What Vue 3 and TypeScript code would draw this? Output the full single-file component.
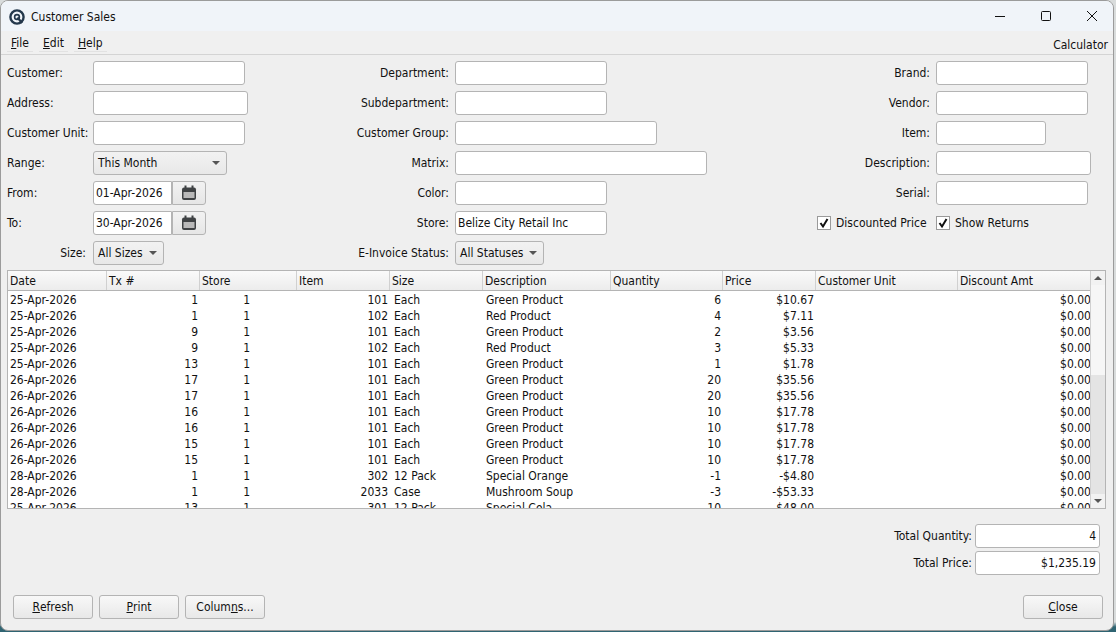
<script setup lang="ts">
type Row = [string, number, number, number, string, string, number, string, string]

const columns = [
  { name: 'Date', width: 99 },
  { name: 'Tx #', width: 93 },
  { name: 'Store', width: 97 },
  { name: 'Item', width: 93 },
  { name: 'Size', width: 93 },
  { name: 'Description', width: 128 },
  { name: 'Quantity', width: 112 },
  { name: 'Price', width: 93 },
  { name: 'Customer Unit', width: 142 },
  { name: 'Discount Amt', width: 136 },
]

const rows: Row[] = [
  ['25-Apr-2026', 1, 1, 101, 'Each', 'Green Product', 6, '$10.67', '$0.00'],
  ['25-Apr-2026', 1, 1, 102, 'Each', 'Red Product', 4, '$7.11', '$0.00'],
  ['25-Apr-2026', 9, 1, 101, 'Each', 'Green Product', 2, '$3.56', '$0.00'],
  ['25-Apr-2026', 9, 1, 102, 'Each', 'Red Product', 3, '$5.33', '$0.00'],
  ['25-Apr-2026', 13, 1, 101, 'Each', 'Green Product', 1, '$1.78', '$0.00'],
  ['26-Apr-2026', 17, 1, 101, 'Each', 'Green Product', 20, '$35.56', '$0.00'],
  ['26-Apr-2026', 17, 1, 101, 'Each', 'Green Product', 20, '$35.56', '$0.00'],
  ['26-Apr-2026', 16, 1, 101, 'Each', 'Green Product', 10, '$17.78', '$0.00'],
  ['26-Apr-2026', 16, 1, 101, 'Each', 'Green Product', 10, '$17.78', '$0.00'],
  ['26-Apr-2026', 15, 1, 101, 'Each', 'Green Product', 10, '$17.78', '$0.00'],
  ['26-Apr-2026', 15, 1, 101, 'Each', 'Green Product', 10, '$17.78', '$0.00'],
  ['28-Apr-2026', 1, 1, 302, '12 Pack', 'Special Orange', -1, '-$4.80', '$0.00'],
  ['28-Apr-2026', 1, 1, 2033, 'Case', 'Mushroom Soup', -3, '-$53.33', '$0.00'],
  ['25-Apr-2026', 13, 1, 301, '12 Pack', 'Special Cola', 10, '$48.00', '$0.00'],
]

const gridColumns = columns.map((c) => c.width + 'px').join(' ')
</script>

<template>
  <div class="window">
    <header class="titlebar">
      <svg class="logo" width="16" height="16" viewBox="0 0 16 16">
        <circle cx="8" cy="8" r="6.6" fill="none" stroke="#24384c" stroke-width="2.4" />
        <circle cx="8" cy="8" r="2.4" fill="none" stroke="#24384c" stroke-width="1.6" />
        <path d="M8.5 8.5 L13 14" stroke="#24384c" stroke-width="2.2" />
      </svg>
      <span class="title">Customer Sales</span>
      <div class="controls">
        <svg width="46" height="30" viewBox="0 0 46 30"><path d="M18 15.5h10" stroke="#111" /></svg>
        <svg width="46" height="30" viewBox="0 0 46 30"><rect x="18.5" y="10.5" width="9" height="9" rx="1" fill="none" stroke="#111" /></svg>
        <svg width="46" height="30" viewBox="0 0 46 30"><path d="M18 10l10 10M28 10L18 20" stroke="#111" /></svg>
      </div>
    </header>

    <nav class="menubar">
      <span class="menu"><u>F</u>ile</span>
      <span class="menu"><u>E</u>dit</span>
      <span class="menu"><u>H</u>elp</span>
      <span class="calculator">Calculator</span>
    </nav>

    <section class="form">
      <label class="lbl">Customer:</label>
      <div class="field"><div class="input" style="width: 152px"></div></div>
      <label class="lbl right">Department:</label>
      <div class="field"><div class="input" style="width: 152px"></div></div>
      <label class="lbl right">Brand:</label>
      <div class="field"><div class="input" style="width: 152px"></div></div>

      <label class="lbl">Address:</label>
      <div class="field"><div class="input" style="width: 155px"></div></div>
      <label class="lbl right">Subdepartment:</label>
      <div class="field"><div class="input" style="width: 152px"></div></div>
      <label class="lbl right">Vendor:</label>
      <div class="field"><div class="input" style="width: 152px"></div></div>

      <label class="lbl">Customer Unit:</label>
      <div class="field"><div class="input" style="width: 152px"></div></div>
      <label class="lbl right">Customer Group:</label>
      <div class="field"><div class="input" style="width: 202px"></div></div>
      <label class="lbl right">Item:</label>
      <div class="field"><div class="input" style="width: 110px"></div></div>

      <label class="lbl">Range:</label>
      <div class="field">
        <div class="combo" style="width: 134px">This Month<i class="caret"></i></div>
      </div>
      <label class="lbl right">Matrix:</label>
      <div class="field"><div class="input" style="width: 252px"></div></div>
      <label class="lbl right">Description:</label>
      <div class="field"><div class="input" style="width: 155px"></div></div>

      <label class="lbl">From:</label>
      <div class="field">
        <div class="input date">01-Apr-2026</div>
        <div class="calbtn">
          <svg width="16" height="16" viewBox="0 0 16 16">
            <rect x="1" y="2.5" width="14" height="12.5" rx="2" fill="#3f4244" />
            <rect x="2.5" y="7" width="11" height="6" fill="#b9b9b9" />
            <path d="M4.5 0.5v3.5M11.5 0.5v3.5" stroke="#3f4244" stroke-width="2" />
          </svg>
        </div>
      </div>
      <label class="lbl right">Color:</label>
      <div class="field"><div class="input" style="width: 152px"></div></div>
      <label class="lbl right">Serial:</label>
      <div class="field"><div class="input" style="width: 152px"></div></div>

      <label class="lbl">To:</label>
      <div class="field">
        <div class="input date">30-Apr-2026</div>
        <div class="calbtn">
          <svg width="16" height="16" viewBox="0 0 16 16">
            <rect x="1" y="2.5" width="14" height="12.5" rx="2" fill="#3f4244" />
            <rect x="2.5" y="7" width="11" height="6" fill="#b9b9b9" />
            <path d="M4.5 0.5v3.5M11.5 0.5v3.5" stroke="#3f4244" stroke-width="2" />
          </svg>
        </div>
      </div>
      <label class="lbl right">Store:</label>
      <div class="field"><div class="input text" style="width: 152px">Belize City Retail Inc</div></div>
      <div class="check first">
        <svg class="box" width="14" height="14" viewBox="0 0 14 14">
          <rect x="0.5" y="0.5" width="13" height="13" fill="#fff" stroke="#9a9a9a" />
          <path d="M3.5 7l2.5 3.5L10.5 3" fill="none" stroke="#111" stroke-width="2" />
        </svg>
        Discounted Price
      </div>
      <div class="check">
        <svg class="box" width="14" height="14" viewBox="0 0 14 14">
          <rect x="0.5" y="0.5" width="13" height="13" fill="#fff" stroke="#9a9a9a" />
          <path d="M3.5 7l2.5 3.5L10.5 3" fill="none" stroke="#111" stroke-width="2" />
        </svg>
        Show Returns
      </div>

      <label class="lbl end">Size:</label>
      <div class="field">
        <div class="combo small" style="width: 71px">All Sizes<i class="caret"></i></div>
      </div>
      <label class="lbl right">E-Invoice Status:</label>
      <div class="field">
        <div class="combo small" style="width: 89px">All Statuses<i class="caret"></i></div>
      </div>
    </section>

    <section class="table">
      <div class="table-main">
        <div class="thead" :style="{ gridTemplateColumns: gridColumns }">
          <div v-for="c in columns" :key="c.name" class="th">{{ c.name }}</div>
        </div>
        <div class="tbody">
          <div v-for="(r, i) in rows" :key="i" class="tr" :style="{ gridTemplateColumns: gridColumns }">
            <div class="td">{{ r[0] }}</div>
            <div class="td num">{{ r[1] }}</div>
            <div class="td num store">{{ r[2] }}</div>
            <div class="td num">{{ r[3] }}</div>
            <div class="td size-cell">{{ r[4] }}</div>
            <div class="td text-cell">{{ r[5] }}</div>
            <div class="td num">{{ r[6] }}</div>
            <div class="td num">{{ r[7] }}</div>
            <div class="td"></div>
            <div class="td num last">{{ r[8] }}</div>
          </div>
        </div>
      </div>
      <div class="scrollbar">
        <div class="arrow"><i class="tri up"></i></div>
        <div class="track"><div class="thumb"></div></div>
        <div class="arrow"><i class="tri"></i></div>
      </div>
    </section>

    <section class="totals">
      <div class="total"><span>Total Quantity:</span><div class="input num-input">4</div></div>
      <div class="total"><span>Total Price:</span><div class="input num-input">$1,235.19</div></div>
    </section>

    <footer class="actions">
      <div class="btn"><u>R</u>efresh</div>
      <div class="btn"><u>P</u>rint</div>
      <div class="btn">Colum<u>n</u>s...</div>
      <div class="btn close"><u>C</u>lose</div>
    </footer>
  </div>
</template>

<style>
html {
  height: 100%;
  background: linear-gradient(#d9dcdc 622px, #2f6472 627px);
}
body {
  margin: 0;
}
</style>

<style scoped>
.window {
  width: 1114px;
  height: 631px;
  box-sizing: border-box;
  background: #efefef;
  border: 1px solid #9b9b9b;
  border-radius: 8px;
  overflow: hidden;
  display: flex;
  flex-direction: column;
  font-family: 'DejaVu Sans Condensed', 'DejaVu Sans', sans-serif;
  font-stretch: condensed;
  font-size: 12px;
  color: #111;
}
.titlebar {
  height: 30px;
  flex: none;
  display: flex;
  align-items: center;
  background: #f0f4f9;
  padding-left: 8px;
}
.logo {
  margin: 2px 6px 0 0;
}
.title {
  margin-top: 2px;
}
.controls {
  margin-left: auto;
  display: flex;
  margin-right: -2px;
}
.menubar {
  height: 23px;
  flex: none;
  display: flex;
  align-items: flex-start;
  padding: 0 5px 0 6px;
  border-bottom: 1px solid #d4d4d4;
  background: #f0f0f0;
}
.menu {
  height: 21px;
  box-sizing: border-box;
  line-height: 24px;
  padding: 0 4px;
  margin-right: 6px;
  border-bottom: 1px solid #e2e2e2;
}
.calculator {
  margin-left: auto;
  line-height: 28px;
}
.form {
  display: grid;
  grid-template-columns: 86px 247px 115px 345px 136px 172px;
  grid-template-rows: repeat(6, 30px) 24px;
  padding: 6px 0 0 6px;
  flex: none;
}
.lbl {
  display: flex;
  align-items: center;
  height: 23px;
}
.lbl.right,
.lbl.end {
  justify-content: flex-end;
  padding-right: 6px;
}
.lbl.end {
  padding-right: 7px;
}
.field {
  display: flex;
  align-items: flex-start;
}
.input {
  height: 24px;
  box-sizing: border-box;
  background: #fff;
  border: 1px solid #b4b4b4;
  border-radius: 3px;
  display: flex;
  align-items: center;
  padding: 0 3px 1px;
}
.input.text {
  padding-left: 2px;
}
.date {
  width: 79px;
  padding-left: 2px;
  border-radius: 3px 0 0 3px;
}
.calbtn {
  width: 34px;
  height: 24px;
  box-sizing: border-box;
  border: 1px solid #b4b4b4;
  border-radius: 0 3px 3px 0;
  background: linear-gradient(#f2f2f2, #e6e6e6);
  display: flex;
  align-items: center;
  justify-content: center;
}
.combo {
  height: 24px;
  box-sizing: border-box;
  border: 1px solid #b4b4b4;
  border-radius: 3px;
  background: linear-gradient(#f2f2f2, #e8e8e8);
  display: flex;
  align-items: center;
  padding: 0 4px 1px;
  position: relative;
}
.caret {
  position: absolute;
  right: 6px;
  top: 9px;
  border-left: 4px solid transparent;
  border-right: 4px solid transparent;
  border-top: 4px solid #555;
}
.check {
  display: flex;
  align-items: center;
  height: 24px;
  gap: 5px;
}
.check.first {
  padding-left: 17px;
}
.table {
  margin: 5px 7px 0 6px;
  height: 239px;
  box-sizing: border-box;
  border: 1px solid #b4b4b4;
  display: flex;
  flex: none;
  background: #fff;
}
.table-main {
  flex: 1;
  min-width: 0;
  overflow: hidden;
}
.thead {
  display: grid;
  height: 20px;
  box-sizing: border-box;
  border-bottom: 1px solid #b4b4b4;
  background: linear-gradient(#fafafa, #ececec);
}
.th {
  display: flex;
  align-items: center;
  padding: 1px 0 0 2px;
  border-right: 1px solid #d0d0d0;
  box-sizing: border-box;
  white-space: nowrap;
  overflow: hidden;
}
.th:last-child {
  border-right: 0;
}
.tbody {
  height: 217px;
  box-sizing: border-box;
  padding-top: 1px;
  overflow: hidden;
}
.tr {
  display: grid;
  height: 16px;
  align-items: center;
}
.td {
  padding: 0 2px;
  box-sizing: border-box;
  line-height: 16px;
  white-space: nowrap;
}
.size-cell {
  padding-left: 4px;
}
.text-cell {
  padding-left: 3px;
}
.num {
  text-align: right;
}
.store {
  padding-right: 47px;
}
.last {
  padding-right: 3px;
}
.scrollbar {
  width: 14px;
  flex: none;
  border-left: 1px solid #d0d0d0;
  display: flex;
  flex-direction: column;
  background: #e4e4e4;
}
.arrow {
  height: 14px;
  flex: none;
  background: #f2f2f2;
  display: flex;
  align-items: center;
  justify-content: center;
}
.tri {
  border-left: 4px solid transparent;
  border-right: 4px solid transparent;
  border-top: 4px solid #555;
}
.tri.up {
  border-top: 0;
  border-bottom: 4px solid #555;
}
.track {
  flex: 1;
}
.thumb {
  height: 90px;
  background: #f6f6f6;
}
.totals {
  margin-top: 15px;
  flex: none;
  display: flex;
  flex-direction: column;
  gap: 3px;
  align-items: flex-end;
  padding-right: 13px;
}
.total {
  display: flex;
  align-items: center;
  gap: 3px;
}
.num-input {
  width: 125px;
  justify-content: flex-end;
  padding-right: 3px;
}
.actions {
  margin-top: auto;
  padding: 0 10px 11px 12px;
  display: flex;
  gap: 6px;
  flex: none;
}
.btn {
  width: 80px;
  height: 24px;
  box-sizing: border-box;
  border: 1px solid #b4b4b4;
  border-radius: 3px;
  background: linear-gradient(#f8f8f8, #e8e8e8);
  display: flex;
  align-items: center;
  justify-content: center;
  padding-bottom: 1px;
  white-space: pre;
}
.close {
  margin-left: auto;
}
</style>
